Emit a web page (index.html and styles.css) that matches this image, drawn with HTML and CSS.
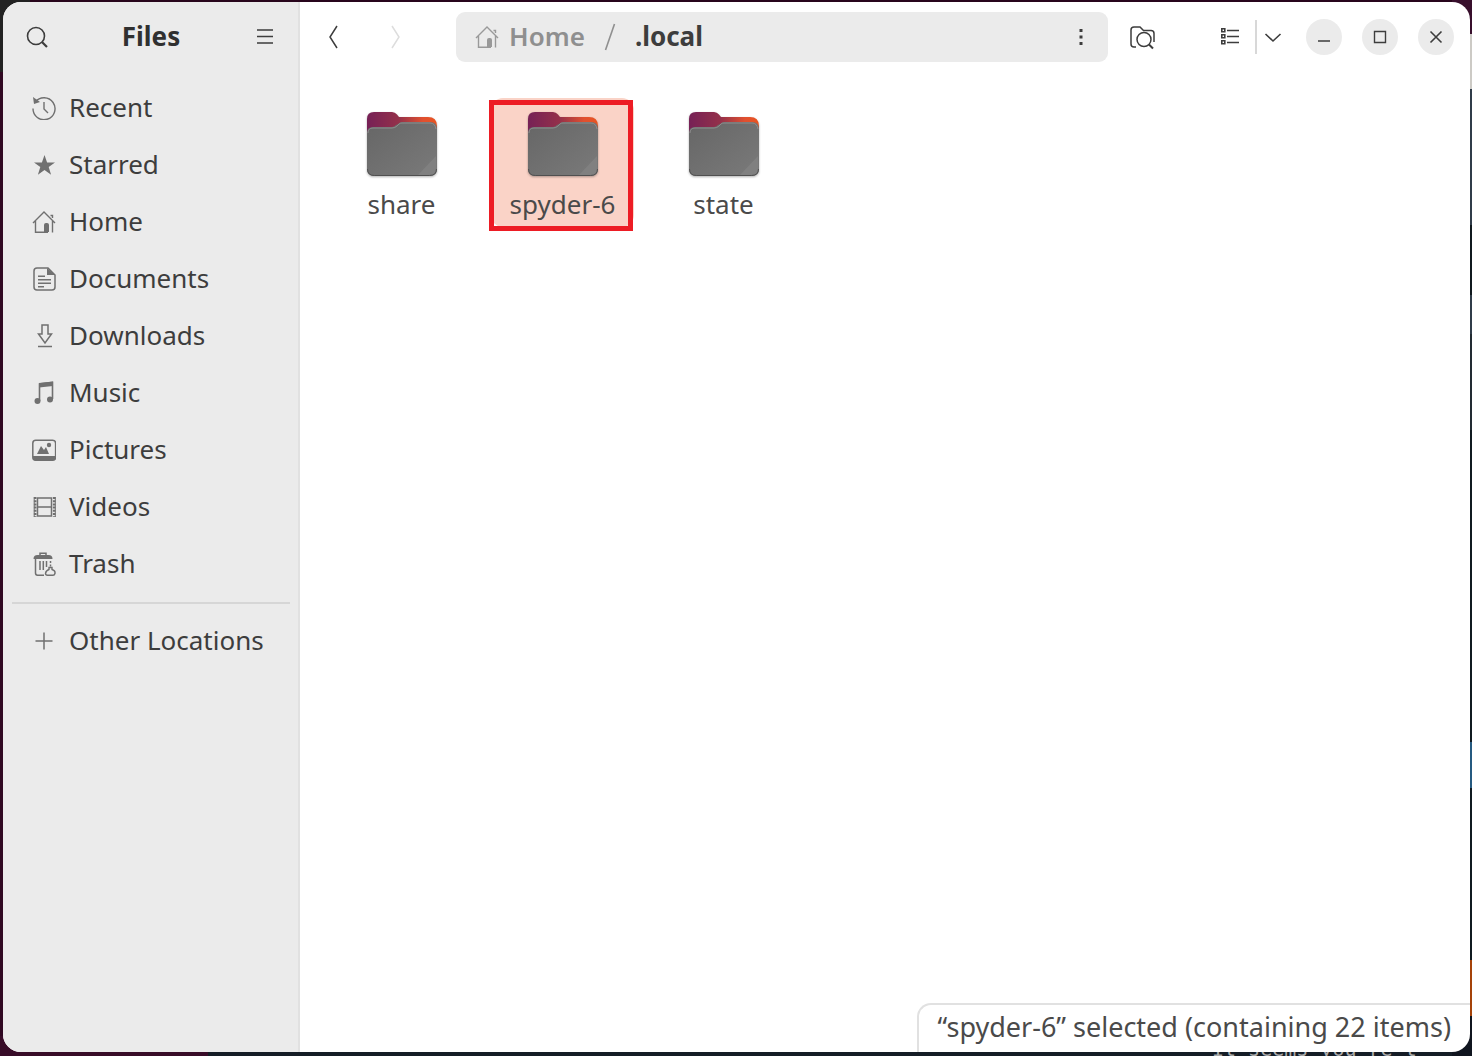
FILE: index.html
```html
<!DOCTYPE html>
<html lang="en">
<head>
<meta charset="utf-8">
<meta name="viewport" content="width=device-width, initial-scale=1">
<title>.local - Files</title>
<link rel="stylesheet" href="styles.css">
</head>
<body class="desktop">
<svg class="defs" width="0" height="0" aria-hidden="true">
  <defs>
    <linearGradient id="folder-back" x1="0" y1="0" x2="1" y2="0">
      <stop offset="0" stop-color="#762156"/><stop offset=".45" stop-color="#94304a"/><stop offset=".8" stop-color="#e05030"/><stop offset="1" stop-color="#e95420"/>
    </linearGradient>
    <linearGradient id="folder-front" x1="0" y1="0" x2="1" y2="1">
      <stop offset="0" stop-color="#666"/><stop offset="1" stop-color="#7a7a7a"/>
    </linearGradient>
    <symbol id="home" viewBox="0 0 24 24">
      <path d="M1 13 12 2l11 11M3.500 11v11.200H16M20.500 11v11.500M18.500 5.500h2v2.500" fill="none" stroke="currentColor" stroke-width="1.400"/>
      <path d="M12 22v-7q0-2 2-2h1q2 0 2 2v7z" fill="currentColor"/>
    </symbol>
    <symbol id="folder" viewBox="0 0 74 70">
      <path d="M2 60V9q0-7 7-7h18q3 0 5 2.500L34 7h29q9 0 9 9v44z" fill="url(#folder-back)"/>
      <path d="M2 23q0-6 6-6h19q2 0 4-2l2-1q2-2 4-2h28q7 0 7 7v40q0 7-7 7H9q-7 0-7-7z" fill="url(#folder-front)"/>
      <path d="M71 46v12q0 7-7 7H53z" fill="#808080"/>
      <path d="M3 23q0-5 5-5h19q3 0 5-2l2-2q1-1 3-1h28q5 0 6 6" fill="none" stroke="#8d8d8d"/>
      <path d="M2.500 59q0 6.500 7 6.500h55q7 0 7-6.500" fill="none" stroke="#505050"/>
    </symbol>
  </defs>
</svg>
<div class="terminal" aria-hidden="true">It seems you’re t</div>
<div class="window">
  <aside class="sidebar">
    <header class="sidebar-header">
      <button class="icon-button" aria-label="Search"><svg width="24" height="24" viewBox="0 0 24 24"><circle cx="11" cy="11" r="8.500" fill="none" stroke="currentColor" stroke-width="1.600"/><path d="m17 17 5 5" stroke="currentColor" stroke-width="2.200"/></svg></button>
      <h1 class="title">Files</h1>
      <button class="icon-button" aria-label="Main menu"><svg width="24" height="24" viewBox="0 0 24 24"><path d="M4 5h16M4 11.500h16M4 18h16" stroke="currentColor" stroke-width="1.500"/></svg></button>
    </header>
    <nav class="places" aria-label="Places">
      <a class="place" href="#recent"><svg class="place-icon" viewBox="0 0 24 24"><path d="M3.300 6A11 11 0 1 1 1 12.500M12 6v7l4 4" fill="none" stroke="currentColor" stroke-width="1.400"/><path d="m1 1 1 7 6-2z" fill="currentColor"/></svg>Recent</a>
      <a class="place" href="#starred"><svg class="place-icon" viewBox="0 0 24 24"><path d="m12.500 2 2.600 7.400h7.900l-6.300 4.700 2.400 7.600-6.600-4.600-6.600 4.600 2.400-7.600L2 9.400h7.900z" fill="currentColor"/></svg>Starred</a>
      <a class="place" href="#home"><svg class="place-icon"><use href="#home"/></svg>Home</a>
      <a class="place" href="#documents"><svg class="place-icon" viewBox="0 0 24 24"><path d="M5 1h11l7 7v12q0 3-3 3H5q-3 0-3-3V4q0-3 3-3z" fill="none" stroke="currentColor" stroke-width="1.500"/><path d="M15 1v7h8zM6 8.500h7v1.500H6zM6 12h13v1.500H6zM6 15.500h13V17H6zM6 19h6v1.500H6z" fill="currentColor"/></svg>Documents</a>
      <a class="place" href="#downloads"><svg class="place-icon" viewBox="0 0 24 24"><path d="M10 1h6v9h3.500L13 19 6.500 10H10zM6 22.500h14" fill="none" stroke="currentColor" stroke-width="1.500"/></svg>Downloads</a>
      <a class="place" href="#music"><svg class="place-icon" viewBox="0 0 24 24"><path d="M7.500 20V3L20.500 1.500V18" fill="none" stroke="currentColor" stroke-width="1.600"/><path d="M7 2 21 .5V5L7 6.500z" fill="currentColor"/><circle cx="5.500" cy="20" r="3" fill="currentColor"/><circle cx="18" cy="18.500" r="3" fill="currentColor"/></svg>Music</a>
      <a class="place" href="#pictures"><svg class="place-icon" viewBox="0 0 24 24"><rect x=".8" y="2.300" width="22.800" height="20" rx="3" fill="none" stroke="currentColor" stroke-width="1.500"/><path d="M1 18h22.500v2q0 2.500-2.500 2.500H3.500Q1 22.500 1 20zM5 16l4-8 3 4 2-3 3 7z" fill="currentColor"/><circle cx="17" cy="7" r="2.200" fill="currentColor"/></svg>Pictures</a>
      <a class="place" href="#videos"><svg class="place-icon" viewBox="0 0 24 24"><path d="M5.500 3h14v18h-14zM5.500 12h14" fill="none" stroke="currentColor" stroke-width="1.500"/><path d="M3.200 2v20M22.200 2v20" stroke="currentColor" stroke-width="2.600" stroke-dasharray="2 1.200"/><path d="M2.200 2v20M23.300 2v20" stroke="currentColor"/></svg>Videos</a>
      <a class="place" href="#trash"><svg class="place-icon" viewBox="0 0 24 24"><path d="M8 4V1.200h6V4M3.500 7v14q0 2.200 2 2.200H12M8 9v9M11.300 9v9M14.500 9v6M18.500 9v2M18.500 12.500v2" fill="none" stroke="currentColor" stroke-width="1.500"/><path d="M1.500 7q0-4 4-4h11q4 0 4 4z" fill="currentColor"/><path d="M17 15.500h3v2q3.500 1 3 4-.5 1.800-2 1.800h-5.500q-2 0-2-2 .5-2.800 3.500-3.800z" fill="none" stroke="currentColor" stroke-width="1.400"/></svg>Trash</a>
      <hr class="separator">
      <a class="place" href="#other"><svg class="place-icon" viewBox="0 0 24 24"><path d="M3.500 12h17M12 3.500v17" stroke="currentColor" stroke-width="1.500"/></svg>Other Locations</a>
    </nav>
  </aside>
  <main class="content">
    <header class="toolbar">
      <div class="history">
        <button class="icon-button" aria-label="Back"><svg width="24" height="24" viewBox="0 0 24 24"><path d="m15 1-7 11 7 11" fill="none" stroke="currentColor" stroke-width="1.500"/></svg></button>
        <button class="icon-button" aria-label="Forward" disabled><svg width="24" height="24" viewBox="0 0 24 24"><path d="m9 1 7 11-7 11" fill="none" stroke="currentColor" stroke-width="1.500"/></svg></button>
      </div>
      <nav class="pathbar" aria-label="Path">
        <a class="crumb" href="#home"><svg class="place-icon"><use href="#home"/></svg>Home</a>
        <svg class="slash" width="12" height="28" viewBox="0 0 12 28" aria-hidden="true"><path d="M10.500 1 1.500 27" stroke="currentColor" stroke-width="1.600"/></svg>
        <a class="crumb current" href="#local">.local</a>
        <button class="icon-button path-menu" aria-label="Folder menu"><svg width="24" height="24" viewBox="0 0 24 24"><path d="M10.500 4h3v3h-3zM10.500 10.500h3v3h-3zM10.500 17h3v3h-3z" fill="currentColor"/></svg></button>
      </nav>
      <button class="icon-button find" aria-label="Search in folder"><svg width="28" height="26" viewBox="0 0 28 26"><path d="M7 23H5q-3 0-3-3V6q0-3 3-3h6l3.500 3.500H22q3 0 3 3V18" fill="none" stroke="currentColor" stroke-width="1.500"/><circle cx="15" cy="15.500" r="7" fill="none" stroke="currentColor" stroke-width="1.500"/><path d="m20 20.500 4 4" stroke="currentColor" stroke-width="2"/></svg></button>
      <div class="view-switch">
        <button class="icon-button" aria-label="List view"><svg width="24" height="24" viewBox="0 0 24 24"><path d="M3.800 3.800h3v3h-3zM3.800 9.800h3v3h-3zM3.800 15.800h3v3h-3zM9 5.500h12M9 11.500h12M9 17.500h12" fill="none" stroke="currentColor" stroke-width="1.600"/></svg></button>
        <button class="icon-button view-options" aria-label="View options"><svg width="18" height="24" viewBox="0 0 18 24"><path d="m1.500 9 7.500 7 7.500-7" fill="none" stroke="currentColor" stroke-width="1.600"/></svg></button>
      </div>
      <div class="window-controls">
        <button class="control" aria-label="Minimize"><svg width="16" height="16" viewBox="0 0 16 16"><path d="M2 12h12" stroke="currentColor" stroke-width="1.600"/></svg></button>
        <button class="control" aria-label="Maximize"><svg width="16" height="16" viewBox="0 0 16 16"><path d="M2.500 2.500h11v11h-11z" fill="none" stroke="currentColor" stroke-width="1.400"/></svg></button>
        <button class="control" aria-label="Close"><svg width="16" height="16" viewBox="0 0 16 16"><path d="m2.500 2.500 11 11m0-11-11 11" stroke="currentColor" stroke-width="1.600"/></svg></button>
      </div>
    </header>
    <section class="files" aria-label="Folder contents">
      <a class="file" href="#share"><svg class="folder"><use href="#folder"/></svg>share</a>
      <a class="file selected" href="#spyder-6" aria-current="true"><svg class="folder"><use href="#folder"/></svg>spyder-6<span class="highlight"></span></a>
      <a class="file" href="#state"><svg class="folder"><use href="#folder"/></svg>state</a>
    </section>
    <footer class="status">“spyder-6” selected (containing 22 items)</footer>
  </main>
</div>
</body>
</html>
```
FILE: styles.css
```css
* { box-sizing: border-box; }

.desktop {
  margin: 0;
  min-height: 100vh;
  padding: 2px 2px 4px 3px;
  display: flex;
  position: relative;
  overflow: hidden;
  font: 26px/32px "Noto Sans", sans-serif;
  color: #3d3d3d;
  background:
    linear-gradient(#380f2c 0 34px, #cccac5 34px 89px, #303c49 89px 225px, #10191e 225px 295px, #303c49 295px 334px, #222b32 334px 430px, #101a20 430px 742px, #255a80 742px 788px, #101a20 788px 960px, #a54309 960px 1016px, #10151f 1016px) right top / 20px 100% no-repeat,
    linear-gradient(90deg, #380c28 0 208px, #151d26 208px) left bottom / 100% 20px no-repeat,
    linear-gradient(#222 0 72px, #300822 72px) left top / 30px 100% no-repeat,
    #28051c;
}

.defs { position: absolute; }

/* The strip of the terminal that shows below the window */
.terminal {
  position: absolute;
  right: 0;
  bottom: 0;
  width: 260px;
  height: 4px;
  overflow: hidden;
  font: 20px/4px "DejaVu Sans Mono", monospace;
  color: #aaa;
  display: flex;
  align-items: flex-end;
  padding-bottom: 5px;
}

.window {
  flex: 1;
  min-width: 0;
  display: flex;
  position: relative;
  overflow: hidden;
  border-radius: 18px;
  background: #fff;
}

.sidebar {
  flex: none;
  width: 297px;
  background: #ebebeb;
  border-right: 2px solid #e1e1e1;
}

.sidebar-header {
  height: 70px;
  padding: 0 8px 0 9px;
  display: flex;
  align-items: center;
  justify-content: space-between;
}

.title {
  margin: 0;
  padding-bottom: 2px;
  font-size: 26px;
  line-height: 32px;
  font-weight: 700;
  color: #303030;
}

.icon-button {
  flex: none;
  width: 50px;
  height: 50px;
  padding: 0;
  border: 0;
  display: flex;
  align-items: center;
  justify-content: center;
  background: none;
  color: #3d3d3d;
}

.icon-button:disabled { color: #ddd; }

.places {
  padding: 6px 8px 6px 9px;
  display: flex;
  flex-direction: column;
}

.place {
  height: 57px;
  padding-left: 20px;
  display: flex;
  align-items: center;
  gap: 13px;
  color: inherit;
  text-decoration: none;
  white-space: nowrap;
}

.place-icon {
  flex: none;
  width: 24px;
  height: 24px;
  margin-top: 2px;
  color: #707070;
}

.separator {
  width: 100%;
  height: 2px;
  margin: 11px 0 7px;
  border: 0;
  background: #d6d6d6;
}

.content {
  flex: 1;
  min-width: 0;
  display: flex;
  flex-direction: column;
}

.toolbar {
  height: 70px;
  padding: 0 16px 0 9px;
  display: flex;
  align-items: center;
}

.history {
  display: flex;
  gap: 11px;
  margin-right: 36px;
}

.pathbar {
  flex: 1;
  height: 50px;
  padding-left: 19px;
  display: flex;
  align-items: center;
  border-radius: 9px;
  background: #ebebeb;
}

.crumb {
  padding-bottom: 2px;
  display: flex;
  align-items: center;
  gap: 10px;
  font-weight: 600;
  color: #8f8f8f;
  text-decoration: none;
}

.crumb .place-icon { color: #999; }

.crumb.current { color: #3d3d3d; font-weight: 700; }

.slash { margin: 0 19px; color: #8f8f8f; }

.path-menu { width: 54px; margin-left: auto; }

.find { margin: 0 37px 0 10px; }

.view-switch { display: flex; align-items: center; }

.view-options {
  width: 34px;
  height: 34px;
  border-left: 2px solid #d8d8d8;
}

.window-controls {
  display: flex;
  gap: 20px;
  margin-left: 17px;
}

.control {
  width: 36px;
  height: 36px;
  padding: 0;
  border: 0;
  border-radius: 50%;
  display: flex;
  align-items: center;
  justify-content: center;
  background: #ebebeb;
  color: #3d3d3d;
}

.files {
  padding: 26px 30px;
  display: flex;
  flex-wrap: wrap;
  gap: 18px;
}

.file {
  position: relative;
  width: 143px;
  padding: 12px 0 7px;
  display: flex;
  flex-direction: column;
  align-items: center;
  gap: 8px;
  border-radius: 12px;
  color: #4a4a4a;
  text-decoration: none;
}

.folder {
  width: 74px;
  height: 70px;
  filter: drop-shadow(0 1px 1px rgba(0, 0, 0, .3));
}

.selected { background: #fad3c7; }

.highlight {
  position: absolute;
  inset: 2px 1px -4px -2px;
  border: 5px solid #ed1c24;
}

.status {
  margin-top: auto;
  align-self: flex-end;
  padding: 6px 19px 9px;
  border: solid #e1e1e1;
  border-width: 2px 0 0 2px;
  border-radius: 14px 0 0;
  font-size: 27px;
  color: #4a4a4a;
}
```
